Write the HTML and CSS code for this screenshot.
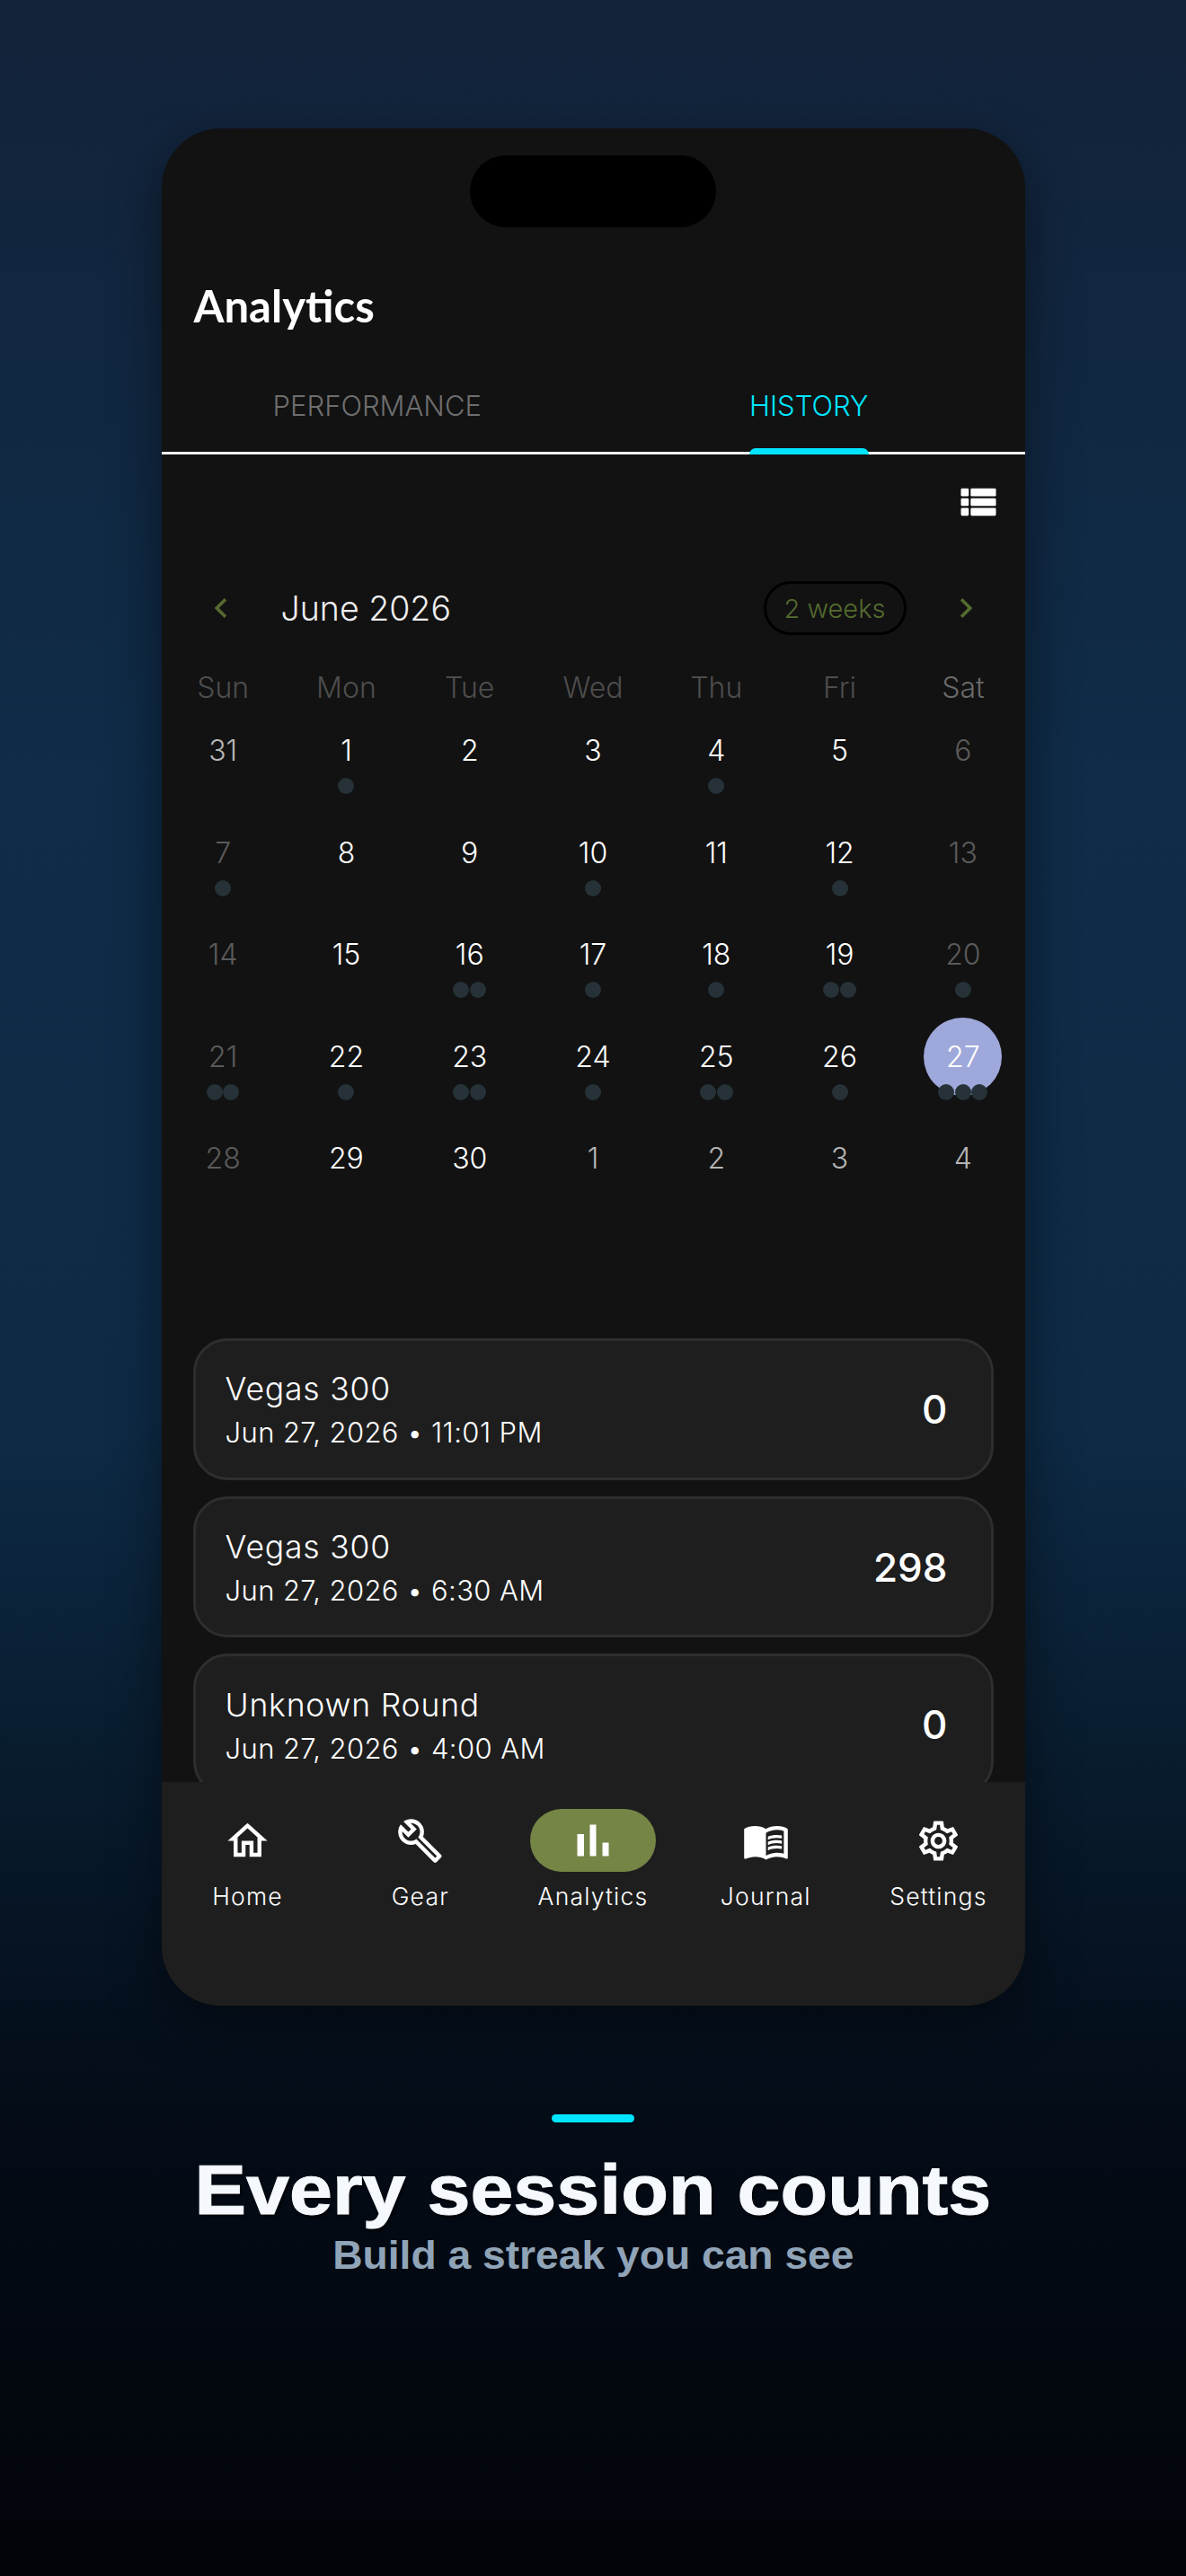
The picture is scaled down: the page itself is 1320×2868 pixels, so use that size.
FILE: index.html
```html
<!DOCTYPE html>
<html lang="en">
<head>
<meta charset="utf-8">
<title>Analytics</title>
<link rel="stylesheet" href="styles.css">
</head>
<body>
<div class="stage">
  <div class="phone">
    <div class="island"></div>
    <main class="screen">
      <h1 class="title">Analytics</h1>
      <div class="tabs">
        <div class="tab"><span class="tab-label">PERFORMANCE</span></div>
        <div class="tab"><span class="tab-label active">HISTORY</span></div>
      </div>
      <div class="toolbar">
        <svg class="ic-list" viewBox="0 0 24 24" fill="#fff"><rect x="3" y="5" width="4" height="4" rx=".6"/><rect x="3" y="10" width="4" height="4" rx=".6"/><rect x="3" y="15" width="4" height="4" rx=".6"/><rect x="8" y="5" width="13" height="4" rx=".6"/><rect x="8" y="10" width="13" height="4" rx=".6"/><rect x="8" y="15" width="13" height="4" rx=".6"/></svg>
      </div>
      <div class="month-row">
        <svg class="chev" viewBox="0 0 24 24"><path d="M15.41 7.41L14 6l-6 6 6 6 1.41-1.41L10.83 12z"/></svg>
        <div class="month">June 2026</div>
        <div class="pill">2 weeks</div>
        <svg class="chev" viewBox="0 0 24 24"><path d="M8.59 16.59L10 18l6-6-6-6-1.41 1.41L13.17 12z"/></svg>
      </div>
      <div class="weekdays">
        <span>Sun</span><span>Mon</span><span>Tue</span><span>Wed</span><span>Thu</span><span>Fri</span><span class="sat">Sat</span>
      </div>
      <div class="cal">
        <div class="day"><span class="n out">31</span></div>
        <div class="day"><span class="n">1</span><div class="dots"><i></i></div></div>
        <div class="day"><span class="n">2</span></div>
        <div class="day"><span class="n">3</span></div>
        <div class="day"><span class="n">4</span><div class="dots"><i></i></div></div>
        <div class="day"><span class="n">5</span></div>
        <div class="day"><span class="n we">6</span></div>

        <div class="day"><span class="n we">7</span><div class="dots"><i></i></div></div>
        <div class="day"><span class="n">8</span></div>
        <div class="day"><span class="n">9</span></div>
        <div class="day"><span class="n">10</span><div class="dots"><i></i></div></div>
        <div class="day"><span class="n">11</span></div>
        <div class="day"><span class="n">12</span><div class="dots"><i></i></div></div>
        <div class="day"><span class="n we">13</span></div>

        <div class="day"><span class="n we">14</span></div>
        <div class="day"><span class="n">15</span></div>
        <div class="day"><span class="n">16</span><div class="dots"><i></i><i></i></div></div>
        <div class="day"><span class="n">17</span><div class="dots"><i></i></div></div>
        <div class="day"><span class="n">18</span><div class="dots"><i></i></div></div>
        <div class="day"><span class="n">19</span><div class="dots"><i></i><i></i></div></div>
        <div class="day"><span class="n we">20</span><div class="dots"><i></i></div></div>

        <div class="day"><span class="n we">21</span><div class="dots"><i></i><i></i></div></div>
        <div class="day"><span class="n">22</span><div class="dots"><i></i></div></div>
        <div class="day"><span class="n">23</span><div class="dots"><i></i><i></i></div></div>
        <div class="day"><span class="n">24</span><div class="dots"><i></i></div></div>
        <div class="day"><span class="n">25</span><div class="dots"><i></i><i></i></div></div>
        <div class="day"><span class="n">26</span><div class="dots"><i></i></div></div>
        <div class="day"><span class="n today">27</span><div class="dots"><i></i><i></i><i></i></div></div>

        <div class="day"><span class="n we">28</span></div>
        <div class="day"><span class="n">29</span></div>
        <div class="day"><span class="n">30</span></div>
        <div class="day"><span class="n out">1</span></div>
        <div class="day"><span class="n out">2</span></div>
        <div class="day"><span class="n out">3</span></div>
        <div class="day"><span class="n out">4</span></div>
      </div>
      <div class="cards">
        <div class="card">
          <div class="card-text"><div class="card-title">Vegas 300</div><div class="card-sub">Jun 27, 2026 • 11:01 PM</div></div>
          <div class="score">0</div>
        </div>
        <div class="card">
          <div class="card-text"><div class="card-title">Vegas 300</div><div class="card-sub">Jun 27, 2026 • 6:30 AM</div></div>
          <div class="score">298</div>
        </div>
        <div class="card">
          <div class="card-text"><div class="card-title">Unknown Round</div><div class="card-sub">Jun 27, 2026 • 4:00 AM</div></div>
          <div class="score">0</div>
        </div>
      </div>
    </main>
    <nav class="nav">
      <div class="nav-item">
        <div class="nav-icon"><svg class="ic" viewBox="0 0 24 24"><path d="M12 5.69l5 4.5V18h-2v-6H9v6H7v-7.81l5-4.5M12 3L2 12h3v8h6v-6h2v6h6v-8h3L12 3z"/></svg></div>
        <div class="nav-label">Home</div>
      </div>
      <div class="nav-item">
        <div class="nav-icon"><svg class="ic" viewBox="0 0 24 24"><path d="M22.61 18.99l-9.08-9.08c.93-2.34.45-5.1-1.44-7C9.79.61 6.21.4 3.66 2.26L7.5 6.11 6.08 7.52 2.25 3.69C.39 6.23.6 9.82 2.9 12.11c1.86 1.86 4.57 2.35 6.89 1.48l9.11 9.11c.39.39 1.02.39 1.41 0l2.3-2.3c.4-.38.4-1.01 0-1.41zm-3 1.6l-9.46-9.46c-.61.45-1.29.72-2 .82-1.36.2-2.79-.21-3.83-1.25C3.37 9.76 2.93 8.5 3 7.26l3.09 3.09 4.24-4.24-3.09-3.09c1.24-.07 2.49.37 3.44 1.31 1.08 1.08 1.49 2.57 1.24 3.96-.12.71-.42 1.37-.88 1.96l9.45 9.45-.88.88z"/></svg></div>
        <div class="nav-label">Gear</div>
      </div>
      <div class="nav-item">
        <div class="nav-icon selected"><svg class="ic-bar" viewBox="0 0 24 24"><path d="M5 9.2h3V19H5zM10.6 5h2.8v14h-2.8zm5.6 8H19v6h-2.8z"/></svg></div>
        <div class="nav-label">Analytics</div>
      </div>
      <div class="nav-item">
        <div class="nav-icon"><svg class="ic" viewBox="0 0 24 24"><path fill-rule="evenodd" d="M21 5c-1.11-.35-2.33-.5-3.5-.5-1.95 0-4.05.4-5.5 1.5-1.45-1.1-3.55-1.5-5.5-1.5S2.45 4.9 1 6v14.65c0 .25.25.5.5.5.1 0 .15-.05.25-.05C3.1 20.45 5.05 20 6.5 20c1.95 0 4.05.4 5.5 1.5 1.35-.85 3.8-1.5 5.5-1.5 1.65 0 3.35.3 4.75 1.05.1.05.15.05.25.05.25 0 .5-.25.5-.5V6c-.6-.45-1.25-.75-2-1zm0 13.5c-1.1-.35-2.3-.5-3.5-.5-1.7 0-4.15.65-5.5 1.5V8c1.35-.85 3.8-1.5 5.5-1.5 1.2 0 2.4.15 3.5.5v11.5z"/><path d="M17.5 10.5c.88 0 1.73.09 2.5.26V9.24c-.79-.15-1.64-.24-2.5-.24-1.7 0-3.24.29-4.5.83v1.66c1.13-.64 2.7-.99 4.5-.99zM13 12.49v1.66c1.13-.64 2.7-.99 4.5-.99.88 0 1.73.09 2.5.26V11.9c-.79-.15-1.64-.24-2.5-.24-1.7 0-3.24.3-4.5.83zM17.5 14.33c-1.7 0-3.24.29-4.5.83v1.66c1.13-.64 2.7-.99 4.5-.99.88 0 1.73.09 2.5.26v-1.52c-.79-.16-1.64-.24-2.5-.24z"/></svg></div>
        <div class="nav-label">Journal</div>
      </div>
      <div class="nav-item">
        <div class="nav-icon"><svg class="ic" viewBox="0 0 24 24"><path d="M19.43 12.98c.04-.32.07-.64.07-.98 0-.34-.03-.66-.07-.98l2.11-1.65c.19-.15.24-.42.12-.64l-2-3.46c-.09-.16-.26-.25-.44-.25-.06 0-.12.01-.17.03l-2.49 1c-.52-.4-1.08-.73-1.69-.98l-.38-2.65C14.46 2.18 14.25 2 14 2h-4c-.25 0-.46.18-.49.42l-.38 2.65c-.61.25-1.17.59-1.69.98l-2.49-1c-.06-.02-.12-.03-.18-.03-.17 0-.34.09-.43.25l-2 3.46c-.13.22-.07.49.12.64l2.11 1.65c-.04.32-.07.65-.07.98 0 .33.03.66.07.98l-2.11 1.65c-.19.15-.24.42-.12.64l2 3.46c.09.16.26.25.44.25.06 0 .12-.01.17-.03l2.49-1c.52.4 1.08.73 1.69.98l.38 2.65c.03.24.24.42.49.42h4c.25 0 .46-.18.49-.42l.38-2.65c.61-.25 1.17-.59 1.69-.98l2.49 1c.06.02.12.03.18.03.17 0 .34-.09.43-.25l2-3.46c.12-.22.07-.49-.12-.64l-2.11-1.65zm-1.98-1.71c.04.31.05.52.05.73 0 .21-.02.43-.05.73l-.14 1.13.89.7 1.08.84-.7 1.21-1.27-.51-1.04-.42-.9.68c-.43.32-.84.56-1.25.73l-1.06.43-.16 1.13-.2 1.35h-1.4l-.19-1.35-.16-1.13-1.06-.43c-.43-.18-.83-.41-1.23-.71l-.91-.7-1.06.43-1.27.51-.7-1.21 1.08-.84.89-.7-.14-1.13c-.03-.31-.05-.54-.05-.74s.02-.43.05-.73l.14-1.13-.89-.7-1.08-.84.7-1.21 1.27.51 1.04.42.9-.68c.43-.32.84-.56 1.25-.73l1.06-.43.16-1.13.2-1.35h1.39l.19 1.35.16 1.13 1.06.43c.43.18.83.41 1.23.71l.91.7 1.06-.43 1.27-.51.7 1.21-1.07.85-.89.7.14 1.13zM12 8c-2.21 0-4 1.79-4 4s1.79 4 4 4 4-1.79 4-4-1.79-4-4-4zm0 6c-1.1 0-2-.9-2-2s.9-2 2-2 2 .9 2 2-.9 2-2 2z"/></svg></div>
        <div class="nav-label">Settings</div>
      </div>
    </nav>
  </div>
  <section class="hero">
    <div class="bar"></div>
    <h2 class="headline">Every session counts</h2>
    <p class="subline">Build a streak you can see</p>
  </section>
</div>
</body>
</html>
```

FILE: styles.css
```css
* { box-sizing: border-box; }
html, body { margin: 0; padding: 0; }
body {
  width: 1320px;
  height: 2868px;
  overflow: hidden;
  background: linear-gradient(180deg, #13233a 0%, #0f2c48 30%, #0e2b46 55%, #081a2c 70%, #040c17 82%, #020409 100%);
  font-family: Inter, "Liberation Sans", sans-serif;
  color: #fff;
}
.stage { display: flex; flex-direction: column; align-items: center; padding-top: 143px; }
.phone {
  position: relative;
  width: 961px;
  height: 2090px;
  border-radius: 66px;
  overflow: hidden;
  display: flex;
  flex-direction: column;
  background: #121212;
  box-shadow: 0 20px 60px rgba(0, 0, 0, .45);
}
.island {
  position: absolute;
  top: 30px;
  left: 343.5px;
  width: 274px;
  height: 80px;
  border-radius: 40px;
  background: #000;
  z-index: 5;
}
.screen { flex: 1; min-height: 0; overflow: hidden; padding-top: 167px; }
.title {
  margin: 0;
  padding-left: 36px;
  font: 700 49px/60px Lato, sans-serif;
  color: #fff;
}
.tabs {
  display: grid;
  grid-template-columns: 1fr 1fr;
  padding: 62px 0 31px;
  border-bottom: 3px solid #f2f2f2;
}
.tab { display: flex; justify-content: center; }
.tab-label {
  position: relative;
  font-size: 31px;
  font-weight: 300;
  line-height: 40px;
  color: #6e6e6e;
}
.tab-label.active { color: #00e5ff; }
.tab-label.active::after {
  content: "";
  position: absolute;
  left: 0;
  right: 0;
  bottom: -34px;
  height: 7px;
  border-radius: 7px 7px 0 0;
  background: #00e5ff;
}
.toolbar { display: flex; justify-content: flex-end; padding: 27px 26px 0 0; }
.ic-list { width: 52px; height: 52px; display: block; }
.month-row {
  display: flex;
  align-items: center;
  height: 60px;
  margin-top: 62px;
  padding: 0 44px;
}
.chev { width: 44px; height: 44px; fill: #556b2f; flex: none; }
.month { margin-left: 45px; font-size: 37.5px; font-weight: 300; color: #eee; }
.pill {
  margin: 0 44px 0 auto;
  width: 159px;
  height: 60px;
  border: 3px solid #000;
  border-radius: 30px;
  display: flex;
  align-items: center;
  justify-content: center;
  font-size: 29px;
  font-weight: 300;
  color: #556b2f;
}
.weekdays {
  display: grid;
  grid-template-columns: repeat(7, 1fr);
  margin-top: 39px;
  text-align: center;
  font-size: 32px;
  font-weight: 300;
  line-height: 40px;
  color: #4d4d4d;
}
.sat { color: #6a6a6a; }
.cal { display: grid; grid-template-columns: repeat(7, 1fr); grid-auto-rows: 113.6px; margin-top: -2px; }
.day { display: flex; flex-direction: column; align-items: center; padding-top: 32px; }
.n {
  position: relative;
  font-size: 32px;
  font-weight: 300;
  line-height: 40px;
  color: #fff;
}
.n.out { color: #b5b5b5; }
.n.we { color: #5a5a5a; }
.n.today::before {
  content: "";
  position: absolute;
  z-index: -1;
  left: 50%;
  top: 50%;
  width: 87px;
  height: 87px;
  margin: -44px 0 0 -43.5px;
  border-radius: 50%;
  background: #9fa8da;
}
.n.today { z-index: 0; }
.dots { position: relative; z-index: 1; display: flex; margin-top: 10px; }
.dots i { display: block; width: 18px; height: 18px; margin: 0 .25px; border-radius: 50%; background: #263238; }
.cards { display: flex; flex-direction: column; gap: 18px; margin: 138px 35px 0; }
.card {
  flex: none;
  display: flex;
  align-items: center;
  justify-content: space-between;
  height: 157.7px;
  padding: 2px 48px 0 33px;
  background: #1e1e1e;
  border: 3px solid #2e2e2e;
  border-radius: 38px;
}
.card-title { font-size: 35.5px; font-weight: 300; line-height: 46px; letter-spacing: .8px; }
.card-sub { font-size: 31px; font-weight: 300; line-height: 40px; margin-top: 5px; letter-spacing: .4px; }
.score { font-size: 44px; font-weight: 500; margin-top: -2px; }
.nav {
  flex: none;
  height: 249px;
  display: grid;
  grid-template-columns: repeat(5, 1fr);
  padding-top: 30px;
  background: #1e1e1e;
}
.nav-item { display: flex; flex-direction: column; align-items: center; }
.nav-icon { width: 140px; height: 70px; border-radius: 35px; display: flex; align-items: center; justify-content: center; }
.nav-icon.selected { background: #758546; }
.ic { width: 53px; height: 53px; fill: #fff; display: block; }
.ic-bar { width: 60px; height: 60px; fill: #fff; display: block; }
.nav-label { margin-top: 9px; font-size: 26.5px; font-weight: 300; line-height: 36px; letter-spacing: 1.2px; }
.hero { display: flex; flex-direction: column; align-items: center; margin-top: 121px; }
.bar { width: 92px; height: 9px; border-radius: 5px; background: #00e5ff; }
.headline {
  margin: 33px 0 0;
  font: 700 77px/84px "Liberation Sans", Arial, sans-serif;
  -webkit-text-stroke: 1px #f5f9fd;
  color: #f5f9fd;
  transform: scaleX(1.12);
  text-shadow: 2px 3px 3px rgba(0, 0, 0, .7);
}
.subline {
  margin: 6px 0 0;
  font: 700 44px/50px "Liberation Sans", Arial, sans-serif;
  color: #90a4b8;
  transform: scaleX(1.05);
}
```
